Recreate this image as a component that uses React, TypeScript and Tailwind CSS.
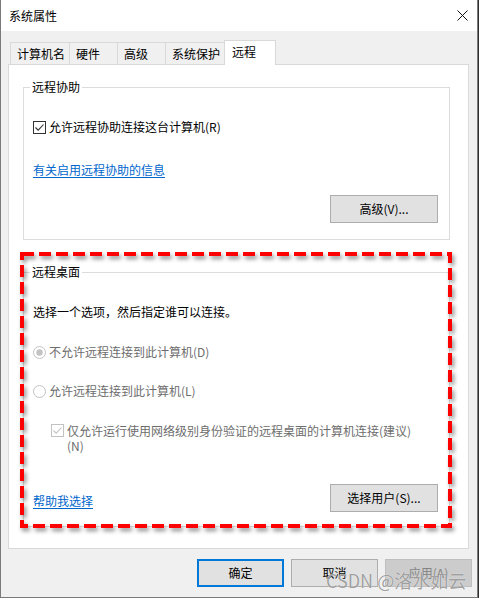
import React from "react";

const font = "font-['Noto_Sans_CJK_SC','Noto_Sans',sans-serif]";

function CheckBox({ disabled }: { disabled?: boolean }) {
  const c = disabled ? "#c2c2c2" : "#333333";
  return (
    <svg width="13" height="13" viewBox="0 0 13 13" className="shrink-0">
      <rect x="0.5" y="0.5" width="12" height="12" fill="#fff" stroke={c} />
      <path d="M2.5 6.5 L5.2 9.2 L10.5 3.5" fill="none" stroke={c} strokeWidth="1.1" />
    </svg>
  );
}

function Radio({ checked }: { checked?: boolean }) {
  return (
    <svg width="13" height="13" viewBox="0 0 13 13" className="shrink-0">
      <circle cx="6.5" cy="6.5" r="6" fill="#fff" stroke="#c2c2c2" />
      {checked && <circle cx="6.5" cy="6.5" r="3.2" fill="#c2c2c2" />}
    </svg>
  );
}

function Btn({ label, className = "" }: { label: string; className?: string }) {
  return (
    <div
      className={`flex h-[28px] items-center justify-center border border-[#adadad] bg-[#e1e1e1] text-[12px] leading-[16px] text-black ${className}`}
    >
      {label}
    </div>
  );
}

const tabs = [
  { name: "计算机名", w: "w-[60px]" },
  { name: "硬件", w: "w-[49px]" },
  { name: "高级", w: "w-[49px]" },
  { name: "系统保护", w: "w-[60px]" },
];

export default function App() {
  return (
    <div className={`relative h-[598px] w-[479px] overflow-hidden bg-[#2d2d2d] ${font}`}>
      <div className="flex h-[598px] w-[478px] flex-col border-x border-b border-[#7a7a7a] bg-[#f0f0f0]">
        {/* title bar */}
        <div className="flex h-[31px] shrink-0 items-center justify-between bg-white pl-[8px] pr-[8px]">
          <span className="text-[12px] leading-[16px] text-black">系统属性</span>
          <svg width="11" height="11" viewBox="0 0 11 11" className="mr-[1px]">
            <path d="M0.5 0.5 L10.5 10.5 M10.5 0.5 L0.5 10.5" stroke="#111" strokeWidth="1" />
          </svg>
        </div>

        <div className="flex flex-1 flex-col pl-[7px] pt-[9px]">
          {/* tabs */}
          <div className="ml-[2px] flex h-[24px] items-end">
            {tabs.map((t, i) => (
              <div
                key={t.name}
                className={`flex h-[22px] items-center border-x border-t border-[#d9d9d9] bg-[#f0f0f0] pl-[6px] text-[12px] leading-[16px] text-black ${t.w} ${i > 0 ? "-ml-px" : ""}`}
              >
                {t.name}
              </div>
            ))}
            <div className="relative z-10 -mb-px -ml-px flex h-[25px] w-[52px] items-center border-x border-t border-[#d9d9d9] bg-white pb-[2px] pl-[7px] text-[12px] leading-[16px] text-black">
              远程
            </div>
          </div>

          {/* panel */}
          <div className="w-[461px] border border-[#d9d9d9] bg-white pb-[21px] pl-[14px] pr-[18px] text-[12px] leading-[16px] text-black">
            <fieldset className="mt-[14px] border border-[#dcdcdc] pb-[16px] pl-[9px] pr-[11px]">
              <legend className="-ml-[3px] px-[2px] leading-[16px]">远程协助</legend>
              <div className="mt-[24px] flex items-center gap-[3px]">
                <CheckBox />
                <span>允许远程协助连接这台计算机(R)</span>
              </div>
              <div className="mt-[27px]">
                <span className="text-[#0066cc] underline underline-offset-2">有关启用远程协助的信息</span>
              </div>
              <div className="mt-[17px] flex justify-end">
                <Btn label="高级(V)..." className="w-[108px]" />
              </div>
            </fieldset>

            <fieldset className="mt-[24px] border border-[#dcdcdc] pb-[14px] pl-[9px] pr-[11px]">
              <legend className="-ml-[3px] px-[2px] leading-[16px]">远程桌面</legend>
              <div className="mt-[24px]">选择一个选项，然后指定谁可以连接。</div>
              <div className="mt-[24px] flex items-center gap-[3px] text-[#6d6d6d]">
                <Radio checked />
                <span>不允许远程连接到此计算机(D)</span>
              </div>
              <div className="mt-[23px] flex items-center gap-[3px] text-[#6d6d6d]">
                <Radio />
                <span>允许远程连接到此计算机(L)</span>
              </div>
              <div className="ml-[18px] mt-[24px] flex items-start gap-[3px] text-[#6d6d6d]">
                <div className="mt-[1px]">
                  <CheckBox disabled />
                </div>
                <span className="leading-[15px]">
                  仅允许运行使用网络级别身份验证的远程桌面的计算机连接(建议)
                  <br />
                  (N)
                </span>
              </div>
              <div className="mt-[31px] flex items-center justify-between">
                <span className="mt-[5px] text-[#0066cc] underline underline-offset-2">帮助我选择</span>
                <Btn label="选择用户(S)..." className="w-[108px]" />
              </div>
            </fieldset>
          </div>

          {/* dialog buttons */}
          <div className="mt-[10px] flex justify-end gap-[7px] pr-[5px]">
            <div className="flex h-[28px] w-[87px] items-center justify-center border-2 border-[#0078d7] bg-[#e1e1e1] text-[12px] leading-[16px] text-black">
              确定
            </div>
            <Btn label="取消" className="w-[87px]" />
            <div className="flex h-[28px] w-[87px] items-center justify-center border border-[#bfbfbf] bg-[#cccccc] text-[12px] leading-[16px] text-[#838383]">
              应用(A)
            </div>
          </div>
        </div>
      </div>

      {/* red annotation */}
      <svg
        width="436"
        height="280"
        viewBox="0 0 436 280"
        className="absolute left-[20px] top-[252px] drop-shadow-[2px_3px_2px_rgba(0,0,0,0.45)]"
      >
        <rect x="2" y="2" width="428" height="272" fill="none" stroke="#ff0000" strokeWidth="4" strokeDasharray="12 5" />
      </svg>

      {/* watermark */}
      <span className="absolute left-[326px] top-[569px] text-[18px] leading-[22px] text-[rgba(120,120,120,0.7)] [text-shadow:0_0_1px_#ffffff]">
        CSDN @洛水如云
      </span>
    </div>
  );
}
